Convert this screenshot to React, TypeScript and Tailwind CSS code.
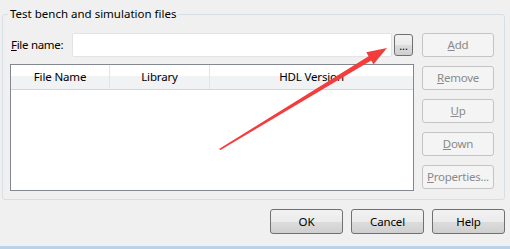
import React from "react";

const font = { fontFamily: '"Noto Sans", "Open Sans", sans-serif' };

const DisabledButton = ({ children }: { children: React.ReactNode }) => (
  <div className="flex h-[24px] w-[72px] items-center justify-center rounded-[3px] border border-[#c4c4c4] bg-[#f4f4f4] text-[11.5px] tracking-[-0.25px] text-[#8a8a8a]">
    {children}
  </div>
);

const PushButton = ({ children }: { children: React.ReactNode }) => (
  <div className="flex h-[25px] w-[73px] items-center justify-center rounded-[3px] border border-[#707070] bg-[linear-gradient(#f2f2f2_0%,#ebebeb_50%,#dddddd_50%,#cfcfcf_100%)] text-[11.5px] text-black">
    {children}
  </div>
);

const App = () => {
  return (
    <div className="relative h-[249px] w-[510px] overflow-hidden bg-[#f0f0f0] tracking-[-0.15px]" style={font}>
      <fieldset className="ml-[2px] mt-[6px] h-[194px] w-[503px] rounded-[3px] border border-[#d5dfe5] px-0">
        <legend className="ml-[5px] px-[2px] text-[11.5px] leading-[16px] tracking-normal text-black">
          Test bench and simulation files
        </legend>
        <div className="flex pl-[7px] pt-[11px]">
          <div className="flex w-[404px] flex-col">
            <div className="flex h-[24px] items-center">
              <span className="ml-[1px] w-[61px] text-[11.5px] tracking-[-0.3px] text-black">
                <span className="underline">F</span>ile name:
              </span>
              <div className="h-[24px] w-[320px] rounded-[2px] border border-[#e3e3e3] bg-white" />
              <div className="ml-[2px] flex h-[22px] w-[19px] items-center justify-center rounded-[3px] border border-[#707070] bg-[linear-gradient(#f2f2f2_0%,#ebebeb_50%,#dddddd_50%,#cfcfcf_100%)] text-[11px] leading-none text-black">
                ...
              </div>
            </div>
            <div className="mt-[7px] h-[127px] w-[404px] border border-[#828790] bg-white">
              <div className="flex h-[25px] border-b border-[#d5d5d5] bg-[linear-gradient(#ffffff_0%,#ffffff_45%,#f1f2f4_45%,#f1f2f4_100%)] text-[11.5px] text-black">
                <div className="flex w-[99px] items-center justify-center border-r border-[#e3e4e6]">File Name</div>
                <div className="flex w-[100px] items-center justify-center border-r border-[#e3e4e6]">Library</div>
                <div className="flex flex-1 items-center justify-center">HDL Version</div>
              </div>
            </div>
          </div>
          <div className="ml-[8px] flex flex-col gap-[9px]">
            <DisabledButton>
              <span className="underline">A</span>dd
            </DisabledButton>
            <DisabledButton>
              <span className="underline">R</span>emove
            </DisabledButton>
            <DisabledButton>
              <span className="underline">U</span>p
            </DisabledButton>
            <DisabledButton>
              <span className="underline">D</span>own
            </DisabledButton>
            <DisabledButton>
              <span className="underline">P</span>roperties...
            </DisabledButton>
          </div>
        </div>
      </fieldset>

      <div className="mt-[9px] flex justify-end gap-[8px] pr-[5px]">
        <PushButton>OK</PushButton>
        <PushButton>Cancel</PushButton>
        <PushButton>Help</PushButton>
      </div>

      <div className="absolute bottom-0 left-0 h-[3px] w-full bg-[#b9d1ea]" />

      <svg className="pointer-events-none absolute left-0 top-0" width="510" height="249">
        <polygon
          points="219,149 368.6,56.2 366.3,52.3 387,48 373.5,64.3 371.2,60.4 220.5,150"
          fill="#f33c3c"
        />
      </svg>
    </div>
  );
};

export default App;
